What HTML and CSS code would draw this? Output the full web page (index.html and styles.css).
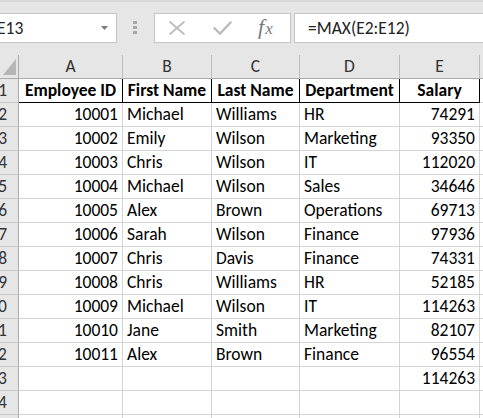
FILE: index.html
```html
<!DOCTYPE html>
<html>
<head>
<meta charset="utf-8">
<link rel="stylesheet" href="styles.css">
</head>
<body>
<div class="toolbar">
  <div class="namebox">
    <span class="name-text">E13</span>
    <svg class="dd" width="7" height="4" viewBox="0 0 7 4"><path d="M0 0H7L3.5 4Z" fill="#7a7a7a"/></svg>
  </div>
  <div class="grip"><span></span><span></span><span></span></div>
  <div class="fbtns">
    <svg class="ic" width="18" height="14" viewBox="0 0 18 14"><path d="M1.5 0.5L16.5 13.5M16.5 0.5L1.5 13.5" stroke="#bcbcbc" stroke-width="1.8" fill="none"/></svg>
    <svg class="ic" width="19" height="14" viewBox="0 0 19 14"><path d="M0.8 6.5L7 12.6L18.2 0.8" stroke="#bcbcbc" stroke-width="2.4" fill="none"/></svg>
    <span class="fx"><i class="f">f</i><i class="x">x</i></span>
  </div>
  <div class="formula">=MAX(E2:E12)</div>
</div>
<div class="sheet">
  <div class="c corner"><svg width="14" height="17" viewBox="0 0 14 17"><path d="M13 0V16H0Z" fill="#b6b6b6"/></svg></div>
  <div class="c ch">A</div><div class="c ch">B</div><div class="c ch">C</div><div class="c ch">D</div><div class="c ch">E</div><div class="c ch last"></div>

  <div class="c rh"><span>1</span></div>
  <div class="c hd">Employee ID</div><div class="c hd">First Name</div><div class="c hd">Last Name</div><div class="c hd">Department</div><div class="c hd">Salary</div><div class="c last"></div>

  <div class="c rh"><span>2</span></div><div class="c n">10001</div><div class="c">Michael</div><div class="c">Williams</div><div class="c">HR</div><div class="c n">74291</div><div class="c last"></div>
  <div class="c rh"><span>3</span></div><div class="c n">10002</div><div class="c">Emily</div><div class="c">Wilson</div><div class="c">Marketing</div><div class="c n">93350</div><div class="c last"></div>
  <div class="c rh"><span>4</span></div><div class="c n">10003</div><div class="c">Chris</div><div class="c">Wilson</div><div class="c">IT</div><div class="c n">112020</div><div class="c last"></div>
  <div class="c rh"><span>5</span></div><div class="c n">10004</div><div class="c">Michael</div><div class="c">Wilson</div><div class="c">Sales</div><div class="c n">34646</div><div class="c last"></div>
  <div class="c rh"><span>6</span></div><div class="c n">10005</div><div class="c">Alex</div><div class="c">Brown</div><div class="c">Operations</div><div class="c n">69713</div><div class="c last"></div>
  <div class="c rh"><span>7</span></div><div class="c n">10006</div><div class="c">Sarah</div><div class="c">Wilson</div><div class="c">Finance</div><div class="c n">97936</div><div class="c last"></div>
  <div class="c rh"><span>8</span></div><div class="c n">10007</div><div class="c">Chris</div><div class="c">Davis</div><div class="c">Finance</div><div class="c n">74331</div><div class="c last"></div>
  <div class="c rh"><span>9</span></div><div class="c n">10008</div><div class="c">Chris</div><div class="c">Williams</div><div class="c">HR</div><div class="c n">52185</div><div class="c last"></div>
  <div class="c rh"><span>10</span></div><div class="c n">10009</div><div class="c">Michael</div><div class="c">Wilson</div><div class="c">IT</div><div class="c n">114263</div><div class="c last"></div>
  <div class="c rh"><span>11</span></div><div class="c n">10010</div><div class="c">Jane</div><div class="c">Smith</div><div class="c">Marketing</div><div class="c n">82107</div><div class="c last"></div>
  <div class="c rh"><span>12</span></div><div class="c n">10011</div><div class="c">Alex</div><div class="c">Brown</div><div class="c">Finance</div><div class="c n">96554</div><div class="c last"></div>
  <div class="c rh"><span>13</span></div><div class="c"></div><div class="c"></div><div class="c"></div><div class="c"></div><div class="c n">114263</div><div class="c last"></div>
  <div class="c rh"><span>14</span></div><div class="c"></div><div class="c"></div><div class="c"></div><div class="c"></div><div class="c"></div><div class="c last"></div>
  <div class="c rh"><span>15</span></div><div class="c"></div><div class="c"></div><div class="c"></div><div class="c"></div><div class="c"></div><div class="c last"></div>
</div>
</body>
</html>
```
FILE: styles.css
```css
html, body {
  margin: 0;
  padding: 0;
  width: 483px;
  height: 418px;
  overflow: hidden;
  background: #ffffff;
  font-family: Carlito, Calibri, Lato, "Open Sans", sans-serif;
  font-size: 17.5px;
  color: #000;
}
.toolbar {
  height: 55px;
  box-sizing: border-box;
  background: #e6e6e6;
  border-top: 2px solid #dadada;
  display: flex;
  align-items: flex-start;
  padding-top: 11px;
}
.namebox {
  width: 137px;
  margin-left: -20px;
  height: 30px;
  box-sizing: border-box;
  background: #fff;
  border: 1px solid #c6c6c6;
  display: flex;
  align-items: center;
  padding-left: 16px;
  padding-right: 8px;
}
.name-text {
  flex: 1;
  color: #222;
}
.dd { display: block; }
.grip {
  width: 4px;
  margin-left: 16px;
  margin-top: 8px;
  display: flex;
  flex-direction: column;
  gap: 2px;
}
.grip span {
  display: block;
  width: 4px;
  height: 3px;
  background: #a8a8a8;
}
.fbtns {
  margin-left: 17px;
  width: 137px;
  height: 30px;
  box-sizing: border-box;
  background: #fff;
  border: 1px solid #c6c6c6;
  display: flex;
  align-items: center;
  padding-left: 13px;
  gap: 27px;
}
.ic { display: block; }
.fx {
  font-family: "Liberation Serif", "DejaVu Serif", serif;
  color: #7a7a7a;
  margin-left: -1px;
  margin-top: -3px;
  display: flex;
  align-items: baseline;
}
.fx .f { font-size: 22px; }
.fx .x { font-size: 17px; margin-left: 1px; }
.formula {
  margin-left: 3px;
  flex: 1;
  height: 30px;
  box-sizing: border-box;
  background: #fff;
  border: 1px solid #c6c6c6;
  border-right: none;
  padding-left: 13px;
  line-height: 28px;
  color: #222;
  white-space: nowrap;
}
.sheet {
  display: grid;
  grid-template-columns: 19px 104px 89px 88px 100px 80px 1fr;
  grid-auto-rows: 24px;
}
.c {
  box-sizing: border-box;
  border-right: 1px solid #d4d4d4;
  border-bottom: 1px solid #d4d4d4;
  padding: 0 4px;
  line-height: 22px;
  white-space: nowrap;
  overflow: hidden;
}
.last { border-right: none; }
.corner, .ch, .rh {
  background: #e6e6e6;
  border-color: #ababab;
}
.ch {
  text-align: center;
  color: #333;
  border-right-color: #bcbcbc;
}
.ch.last { border-right: none; }
.corner {
  display: flex;
  align-items: flex-start;
  padding: 4px 0 0 3px;
  border-right-color: #ababab;
}
.corner svg { display: block; }
.rh {
  display: flex;
  justify-content: flex-end;
  padding: 0 11px 0 0;
  border-bottom-color: #c8c8c8;
  color: #333;
}
.hd {
  font-weight: bold;
  text-align: center;
  border-right-color: #000;
  border-bottom-color: #000;
  padding: 0 2px;
}
.hd + .last { border-bottom-color: #d4d4d4; }
.n { text-align: right; }
```
